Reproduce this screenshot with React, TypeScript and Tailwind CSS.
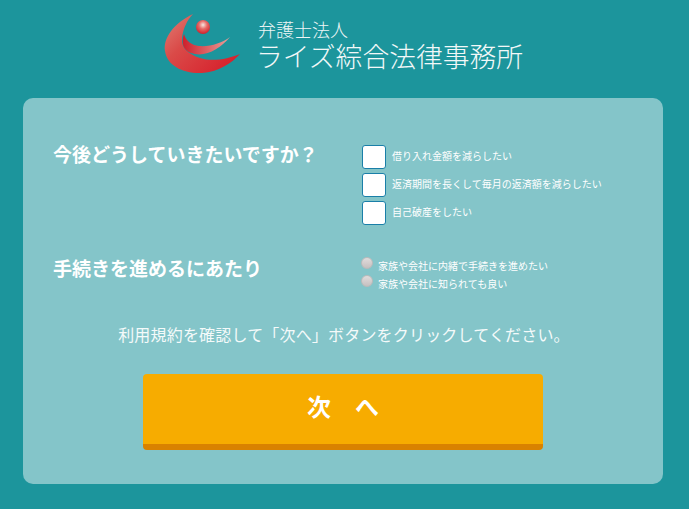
import React from 'react';

const font = '[font-family:"Noto_Sans_CJK_JP","Noto_Sans_CJK_SC",sans-serif]';

// Red swoosh mark next to the firm name
const Logo = () => (
  <svg width="90" height="75" viewBox="0 0 90 75" className="shrink-0">
    <defs>
      <linearGradient id="outer" x1="0" y1="0" x2="1" y2="0.8">
        <stop offset="0" stopColor="#e07f75" />
        <stop offset="0.4" stopColor="#da4a48" />
        <stop offset="1" stopColor="#d61f2b" />
      </linearGradient>
      <linearGradient id="inner" x1="0" y1="0" x2="1" y2="0">
        <stop offset="0" stopColor="#cf1f2b" />
        <stop offset="1" stopColor="#e9a09a" />
      </linearGradient>
      <radialGradient id="ball" cx="0.5" cy="0.35" r="0.65">
        <stop offset="0" stopColor="#f6e6e0" />
        <stop offset="0.45" stopColor="#e66a66" />
        <stop offset="1" stopColor="#cf1f2b" />
      </radialGradient>
    </defs>
    <path d="M33 9 C14 18 3 33 5 46 C7 61 24 69 42 68 C58 67 72 58 80 49 C68 54 52 57 40 53 C28 49 21 43 22 33 C23 24 27 15 33 9Z" fill="url(#outer)" />
    <path d="M70 32 C62 38 50 42 39 41 C31 40 26 36 24 29 C21 38 23 45 31 48 C45 53 60 44 70 32Z" fill="url(#inner)" />
    <circle cx="43" cy="22" r="7" fill="url(#ball)" />
  </svg>
);

const checks = ['借り入れ金額を減らしたい', '返済期間を長くして毎月の返済額を減らしたい', '自己破産をしたい'];
const radios = ['家族や会社に内緒で手続きを進めたい', '家族や会社に知られても良い'];

export default function App() {
  return (
    <div className={`${font} w-[689px] h-[509px] overflow-hidden bg-[#1c959c] text-white`}>
      <header className="h-[98px] pl-[160px] pt-[5px] flex">
        <Logo />
        <div className="ml-[8px] pt-[11px] font-light">
          <div className="text-[18px] leading-[26px] text-[#eef6f6]">弁護士法人</div>
          <div className="text-[26.8px] leading-[28px] ml-[-2px] whitespace-nowrap text-[#f2f8f8]">ライズ綜合法律事務所</div>
        </div>
      </header>

      <main className="ml-[23px] w-[640px] h-[386px] rounded-[10px] bg-[#84c5c9] pt-[47px]">
        <section className="flex pl-[30px]">
          <h2 className="w-[309px] text-[19px] leading-[20px] font-bold mt-[-1px] h-[20px]">今後どうしていきたいですか？</h2>
          <div className="flex flex-col gap-[4px]">
            {checks.map((label) => (
              <label key={label} className="flex items-center gap-[6px] h-[24px]">
                <span className="w-[24px] h-[24px] bg-white border border-[#1a7fa8] rounded-[3px]" />
                <span className="text-[10px] leading-[14px] relative top-[-1.5px]">{label}</span>
              </label>
            ))}
          </div>
        </section>

        <section className="flex pl-[30px] mt-[32px]">
          <h2 className="w-[308px] text-[19px] leading-[20px] font-bold pt-[1px]">手続きを進めるにあたり</h2>
          <div className="flex flex-col gap-[6px]">
            {radios.map((label) => (
              <label key={label} className="flex gap-[5px] h-[12px]">
                <span className="w-[12px] h-[12px] rounded-full border border-[#bbbbbb] bg-[linear-gradient(#e0dcdc,#c6c0c0)]" />
                <span className="text-[10px] leading-[14px] mt-[2px]">{label}</span>
              </label>
            ))}
          </div>
        </section>

        <p className="mt-[35px] pl-[2px] text-center text-[16px] tracking-[0.18px] leading-[24px] text-[#f4fafa]">
          利用規約を確認して「次へ」ボタンをクリックしてください。
        </p>

        <button className="block mx-auto mt-[28px] w-[400px] h-[76px] pb-[6px] rounded-[4px] bg-[#f7ac00] border-b-[6px] border-[#d98200] text-[24px] font-bold leading-[30px]">
          次　へ
        </button>
      </main>
    </div>
  );
}
